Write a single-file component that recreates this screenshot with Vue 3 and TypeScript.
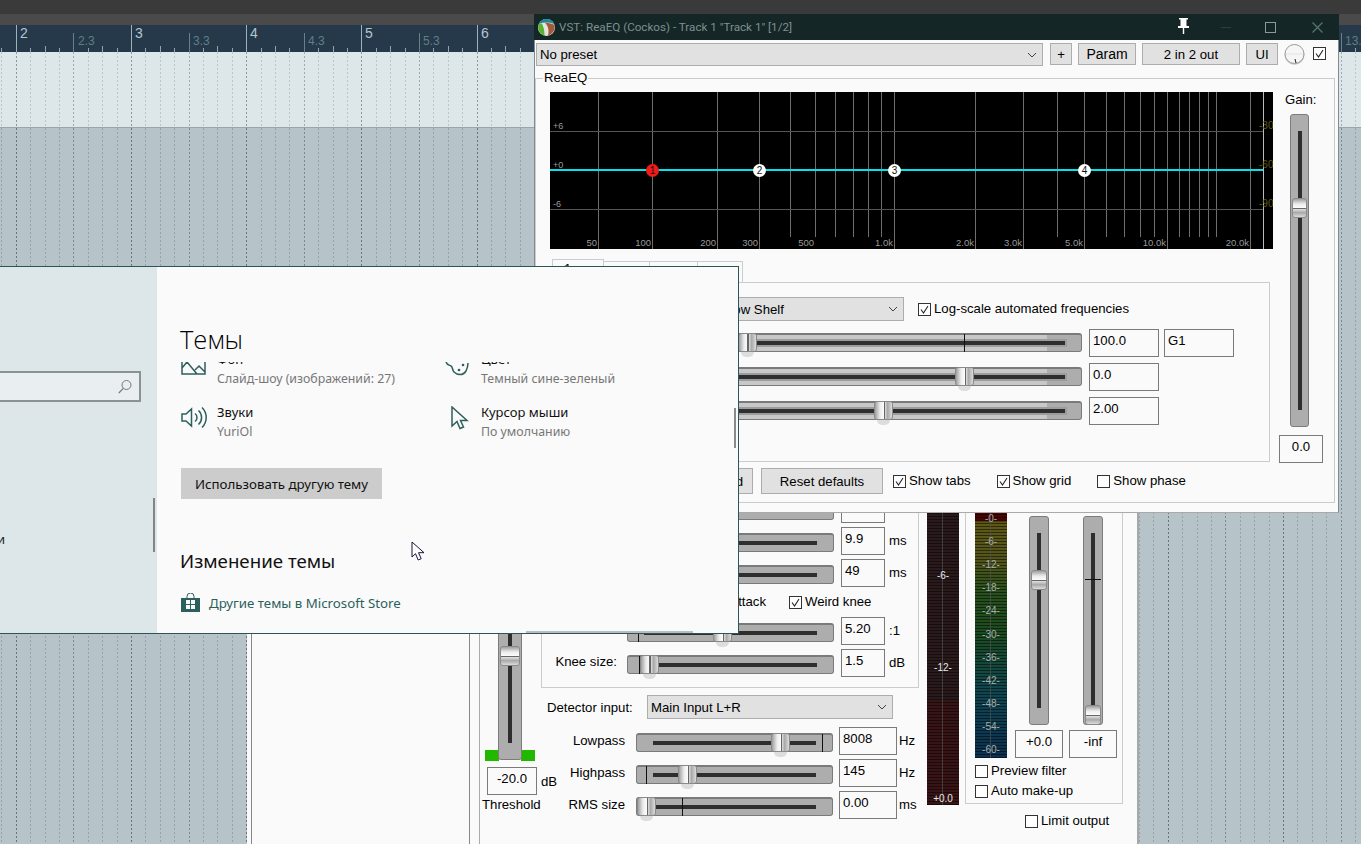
<template>
  <div class="desktop">
    <!-- arrange view behind the windows -->
    <div class="top-strip"></div>
    <div class="menu-strip"></div>
    <div class="ruler"></div>
    <div class="track-light"></div>
    <div class="track-dark"></div>

    <svg class="timeline" width="1361" height="844">
      <g v-for="l in beatLines" :key="l.x">
        <line :x1="l.x" :x2="l.x" :y1="l.rulerTop" y2="52" :stroke="l.rulerColor" />
        <line :x1="l.x" :x2="l.x" y1="52" y2="127" :stroke="l.lightColor" stroke-dasharray="2 2" />
        <line :x1="l.x" :x2="l.x" y1="128" y2="844" :stroke="l.darkColor" stroke-dasharray="2 2" />
      </g>
      <text v-for="b in barLabels" :key="b.text" :x="b.x" :y="b.y" :class="b.half ? 'half-label' : 'bar-label'">{{ b.text }}</text>
    </svg>

    <!-- compressor window, mostly covered -->
    <div class="comp-window">
      <div class="comp-rail"></div>
      <div class="comp-gutter"></div>
      <div class="comp-main">
        <div class="threshold-col">
          <div class="green green-l"></div>
          <div class="green green-r"></div>
          <div class="vfader threshold-fader">
            <div class="vthumb" :style="{ top: '165px' }"></div>
          </div>
          <div class="threshold-value">
            <div class="valbox center thr-box">-20.0</div>
            <span>dB</span>
          </div>
          <div class="threshold-label">Threshold</div>
        </div>

        <div class="comp-center">
          <div class="comp-group">
            <div v-for="r in compRows.slice(0, 3)" :key="r.id" class="comp-row">
              <span class="row-label"></span>
              <div class="slider">
                <div class="thumb" :style="{ left: r.thumb + 'px' }"></div>
              </div>
              <div class="valbox comp-box">{{ r.value }}</div>
              <span class="unit">{{ r.unit }}</span>
            </div>
            <div class="comp-checks">
              <label class="chk-row"><span>Auto attack</span></label>
              <label class="chk-row">
                <span class="box"><svg viewBox="0 0 11 11"><path d="M2 5.500l2.500 3.500 4.500-7" /></svg></span>Weird knee
              </label>
            </div>
            <div v-for="r in compRows.slice(3)" :key="r.id" class="comp-row">
              <span class="row-label">{{ r.label }}</span>
              <div class="slider">
                <i class="mark" :style="{ left: r.mark + 'px' }"></i>
                <div class="thumb" :style="{ left: r.thumb + 'px' }"></div>
              </div>
              <div class="valbox comp-box">{{ r.value }}</div>
              <span class="unit">{{ r.unit }}</span>
            </div>
          </div>

          <div class="detector-row">
            <span>Detector input:</span>
            <div class="combo detector-combo">
              <span>Main Input L+R</span>
              <svg class="chev" viewBox="0 0 10 6"><path d="M1 1l4 4 4-4" /></svg>
            </div>
          </div>
          <div v-for="r in filterRows" :key="r.label" class="filter-row">
            <span class="filter-label">{{ r.label }}</span>
            <div class="slider filter-slider">
              <i class="mark" :style="{ left: r.mark + 'px' }"></i>
              <div class="thumb" :style="{ left: r.thumb + 'px' }"></div>
            </div>
            <div class="valbox filter-box">{{ r.value }}</div>
            <span class="unit">{{ r.unit }}</span>
          </div>
        </div>

        <div class="meter meter-in">
          <span v-for="m in inMeterLabels" :key="m.text" class="m-label" :style="{ top: m.top + 'px' }">{{ m.text }}</span>
        </div>

        <div class="output-col">
          <div class="output-group">
            <div class="output-top">
              <div class="meter meter-out">
                <span v-for="m in outMeterLabels" :key="m.text" class="m-label" :style="{ top: m.top + 'px' }">{{ m.text }}</span>
              </div>
              <div class="out-strip">
                <div class="vfader out-fader">
                  <div class="vthumb" :style="{ top: '53px' }"></div>
                </div>
                <div class="valbox center out-box">+0.0</div>
              </div>
              <div class="out-strip">
                <div class="vfader out-fader">
                  <i class="hmark"></i>
                  <div class="vthumb" :style="{ top: '188px' }"></div>
                </div>
                <div class="valbox center out-box">-inf</div>
              </div>
            </div>
            <label class="chk-row out-check"><span class="box"></span>Preview filter</label>
            <label class="chk-row out-check"><span class="box"></span>Auto make-up</label>
          </div>
          <label class="chk-row limit-check"><span class="box"></span>Limit output</label>
        </div>
      </div>
    </div>

    <!-- ReaEQ plugin window -->
    <div class="eq-window">
      <div class="eq-title">
        <svg class="eq-logo" width="17" height="17" viewBox="0 0 16 16">
          <circle cx="8" cy="8" r="8" fill="#e8e4dc" />
          <path d="M.8 4.6a8 8 0 0 1 14.4 0Q8 2 .8 4.6z" fill="#1d8a9c" />
          <path d="M.7 5Q-1.400 12 6 15.800Q6.500 10 3.800 4.200z" fill="#58b32e" />
          <path d="M6.500 3.400Q11 3.600 15.400 5.400Q17 12.600 9.200 15.900Q11.500 9 6.500 3.400z" fill="#a3593c" />
        </svg>
        <span class="eq-title-text">VST: ReaEQ (Cockos) - Track 1 "Track 1" [1/2]</span>
        <svg class="pin" width="13" height="16" viewBox="0 0 13 16">
          <path d="M2 0h9v1.500H9.500V8H12v2H1V8h2.500V1.500H2zM5.800 10h1.400v6H5.800z" fill="#fff" />
        </svg>
        <i class="win-min"></i>
        <i class="win-max"></i>
        <svg class="win-close" width="11" height="11" viewBox="0 0 11 11">
          <path d="M.5.5l10 10M10.500.5l-10 10" stroke="#557474" stroke-width="1.300" />
        </svg>
      </div>

      <div class="eq-toolbar">
        <div class="combo preset-combo">
          <span>No preset</span>
          <svg class="chev" viewBox="0 0 10 6"><path d="M1 1l4 4 4-4" /></svg>
        </div>
        <button class="btn plus-btn">+</button>
        <button class="btn param-btn">Param</button>
        <button class="btn io-btn">2 in 2 out</button>
        <button class="btn ui-btn">UI</button>
        <svg class="knob" width="21" height="23" viewBox="0 0 21 23">
          <circle cx="10.500" cy="12" r="10" fill="#cfcfcf" />
          <circle cx="10.500" cy="11" r="9.500" fill="#f6f6f6" stroke="#9a9a9a" />
          <path d="M2 11h17" stroke="#e2e2e2" />
          <path d="M11 16l1 4" stroke="#222" />
        </svg>
        <span class="box enable-box"><svg viewBox="0 0 11 11"><path d="M2 5.500l2.500 3.500 4.500-7" /></svg></span>
      </div>

      <div class="eq-group">
        <span class="eq-group-label">ReaEQ</span>
        <div class="eq-left">
          <svg class="graph" width="723" height="157">
            <rect width="723" height="157" fill="#000" />
            <line v-for="g in gridX" :key="g.x" :x1="g.x" :x2="g.x" y1="0" :y2="g.long ? 157 : 145" stroke="#6e6e6e" />
            <line x1="0" x2="713" y1="39.500" y2="39.500" stroke="#555" />
            <line x1="0" x2="713" y1="117.500" y2="117.500" stroke="#555" />
            <line x1="713.500" x2="713.500" y1="0" y2="157" stroke="#bbb" />
            <rect x="0" y="77" width="713" height="2" fill="#00e4ea" />
            <text v-for="t in gridDb" :key="t.text" x="3" :y="t.y" class="db-text">{{ t.text }}</text>
            <text v-for="t in gridDb" :key="'r' + t.y" x="709" :y="t.y" class="db-right">{{ t.right }}</text>
            <text v-for="t in gridHz" :key="t.text" :x="t.x" y="154" text-anchor="end" class="hz-text">{{ t.text }}</text>
            <g v-for="(n, i) in eqNodes" :key="n">
              <circle :cx="n" cy="78.500" r="6.500" :fill="i === 0 ? '#f01a1a' : '#fff'" />
              <text :x="n" y="82" text-anchor="middle" class="node-text">{{ i + 1 }}</text>
            </g>
          </svg>

          <div class="tabs">
            <div class="tab active"><span>1</span></div>
            <div class="tab t2"></div>
            <div class="tab t3"></div>
            <div class="tab t4"></div>
          </div>
          <div class="band-panel">
            <div class="band-type">
              <div class="combo band-combo">
                <span>Low Shelf</span>
                <svg class="chev" viewBox="0 0 10 6"><path d="M1 1l4 4 4-4" /></svg>
              </div>
              <label class="chk-row">
                <span class="box"><svg viewBox="0 0 11 11"><path d="M2 5.500l2.500 3.500 4.500-7" /></svg></span>Log-scale automated frequencies
              </label>
            </div>
            <div v-for="r in bandRows" :key="r.value" class="band-row">
              <div class="slider eq-slider">
                <i v-if="r.mark" class="mark" :style="{ left: r.mark + 'px' }"></i>
                <div class="thumb" :style="{ left: r.thumb + 'px' }"></div>
              </div>
              <div class="valbox band-box">{{ r.value }}</div>
              <div v-if="r.extra" class="valbox band-box">{{ r.extra }}</div>
            </div>
          </div>
          <div class="eq-bottom">
            <button class="btn reset-band">Reset band</button>
            <button class="btn reset-all">Reset defaults</button>
            <label class="chk-row"><span class="box"><svg viewBox="0 0 11 11"><path d="M2 5.500l2.500 3.500 4.500-7" /></svg></span>Show tabs</label>
            <label class="chk-row"><span class="box"><svg viewBox="0 0 11 11"><path d="M2 5.500l2.500 3.500 4.500-7" /></svg></span>Show grid</label>
            <label class="chk-row"><span class="box"></span>Show phase</label>
          </div>
        </div>

        <div class="gain-col">
          <div class="gain-label">Gain:</div>
          <div class="vfader gain-fader">
            <div class="vthumb" :style="{ top: '83px' }"></div>
          </div>
          <div class="valbox center gain-box">0.0</div>
        </div>
      </div>
    </div>

    <!-- Windows settings window -->
    <div class="settings">
      <aside class="side">
        <div class="search">
          <svg width="16" height="16" viewBox="0 0 16 16">
            <circle cx="9.500" cy="6" r="4.500" fill="none" stroke="#777" />
            <path d="M6.300 9.300L1.800 14" stroke="#777" stroke-width="1.200" />
          </svg>
        </div>
        <div class="side-item">и</div>
        <i class="side-scroll"></i>
      </aside>
      <main class="content">
        <h1>Темы</h1>
        <div class="scroll">
          <div class="tiles">
            <div class="tile">
              <svg width="26" height="24" viewBox="0 0 26 24" class="ic">
                <path d="M1 9v12h23V9M1 15l5-6 10 12M14 17l4-4 6 6" />
              </svg>
              <div><div class="t">Фон</div><div class="s">Слайд-шоу (изображений: 27)</div></div>
            </div>
            <div class="tile">
              <svg width="26" height="24" viewBox="0 0 26 24" class="ic">
                <path d="M1 9c1 3 3 3 5 4 2 1 1 4 3 6 3 3 9 4 12-1 1-2 2-4 2-8" />
                <circle cx="14" cy="17" r="1.300" fill="#2d5f5d" stroke="none" />
                <circle cx="18" cy="12" r="1.300" fill="#2d5f5d" stroke="none" />
              </svg>
              <div><div class="t">Цвет</div><div class="s">Темный сине-зеленый</div></div>
            </div>
            <div class="tile">
              <svg width="26" height="24" viewBox="0 0 26 24" class="ic">
                <path d="M1 8h4l5.500-5v17L5 15H1zM14 7.500a5 5 0 0 1 0 8M17.500 4.500a9.500 9.500 0 0 1 0 14M21 1.500a14 14 0 0 1 0 20" />
              </svg>
              <div><div class="t">Звуки</div><div class="s">YuriOl</div></div>
            </div>
            <div class="tile">
              <svg width="26" height="24" viewBox="0 0 26 24" class="ic">
                <path d="M7 1v19l5-4.500 3 7 3.500-1.500-3-6.500H22z" />
              </svg>
              <div><div class="t">Курсор мыши</div><div class="s">По умолчанию</div></div>
            </div>
          </div>
          <button class="theme-btn">Использовать другую тему</button>
          <h2>Изменение темы</h2>
          <a class="store">
            <svg width="19" height="19" viewBox="0 0 19 19">
              <path d="M6 5V3.500a3.500 3.500 0 0 1 7 0V5" fill="none" stroke="#2d5f5d" />
              <path d="M0 5h19v14H0z" fill="#2d5f5d" />
              <path d="M5 7h4v4H5zM10 7h4v4h-4zM5 12h4v4H5zM10 12h4v4h-4z" fill="#fafafa" />
            </svg>
            Другие темы в Microsoft Store
          </a>
        </div>
        <i class="content-scroll"></i>
        <i class="bottom-scroll"></i>
      </main>
    </div>

    <svg class="pointer" width="14" height="21" viewBox="0 0 14 21">
      <path d="M1 1v15l3.500-3.300 2.700 6.300 3-1.300-2.700-6H13z" fill="#fff" stroke="#14143c" stroke-linejoin="round" />
    </svg>
  </div>
</template>

<script setup lang="ts">
interface BeatLine {
  x: number
  rulerTop: number
  rulerColor: string
  lightColor: string
  darkColor: string
}

// 14.4px per eighth of a bar, bar "2" sits at x=15.7
const beatLines: BeatLine[] = []
for (let k = -1; k < 94; k++) {
  const x = Math.round(15.7 + 14.4 * k) + 0.5
  const bar = k % 8 === 0
  const half = k % 4 === 0
  const quarter = k % 2 === 0
  beatLines.push({
    x,
    rulerTop: bar ? 25 : half ? 33 : quarter ? 46 : 48,
    rulerColor: bar ? '#9fb2bb' : half ? '#688088' : '#93a5ac',
    lightColor: bar ? '#87979c' : half ? '#9dabaf' : '#b9c6ca',
    darkColor: bar ? '#67767c' : half ? '#7b8a90' : '#94a4aa',
  })
}

const allBarLabels: { text: string; x: number; y: number; half: boolean }[] = []
for (let n = 2; n <= 13; n++) {
  const x = Math.round(15.7 + 115.2 * (n - 2))
  allBarLabels.push({ text: String(n), x: x + 4, y: 38, half: false })
  allBarLabels.push({ text: n + '.3', x: x + 62, y: 45, half: true })
}
// labels behind the plugin window are never seen
const barLabels = allBarLabels.filter((b) => b.x < 520 || b.x > 1339)

const gridX = [
  [48, 1], [102, 1], [167, 1], [209, 1], [240, 0], [265, 0], [285, 0], [303, 0], [318, 0], [331, 0], [344, 1],
  [425, 1], [473, 1], [507, 0], [534, 1], [556, 0], [574, 0], [590, 0], [604, 0], [617, 1], [629, 0], [639, 0],
  [649, 0], [658, 0], [666, 0], [700, 1],
].map(([x, long]) => ({ x: x + 0.5, long: long === 1 }))

const gridDb = [
  { text: '+6', right: '-30', y: 37 },
  { text: '+0', right: '-60', y: 76 },
  { text: '-6', right: '-90', y: 115 },
]

const gridHz = [
  { text: '50', x: 47 }, { text: '100', x: 101 }, { text: '200', x: 166 }, { text: '300', x: 208 },
  { text: '500', x: 264 }, { text: '1.0k', x: 343 }, { text: '2.0k', x: 424 }, { text: '3.0k', x: 472 },
  { text: '5.0k', x: 533 }, { text: '10.0k', x: 616 }, { text: '20.0k', x: 699 },
]

const eqNodes = [102.5, 209.5, 344.5, 534.5]

const bandRows = [
  { value: '100.0', extra: 'G1', thumb: 98, mark: 324 },
  { value: '0.0', extra: '', thumb: 315, mark: 0 },
  { value: '2.00', extra: '', thumb: 234, mark: 0 },
]

const compRows = [
  { id: 'pre', label: '', value: '', unit: '', thumb: 40, mark: 10 },
  { id: 'attack', label: '', value: '9.9', unit: 'ms', thumb: 40, mark: 10 },
  { id: 'release', label: '', value: '49', unit: 'ms', thumb: 40, mark: 10 },
  { id: 'ratio', label: '', value: '5.20', unit: ':1', thumb: 85, mark: 10 },
  { id: 'knee', label: 'Knee size:', value: '1.5', unit: 'dB', thumb: 12, mark: 11 },
]

const filterRows = [
  { label: 'Lowpass', value: '8008', unit: 'Hz', thumb: 134, mark: 185 },
  { label: 'Highpass', value: '145', unit: 'Hz', thumb: 41, mark: 9 },
  { label: 'RMS size', value: '0.00', unit: 'ms', thumb: 0, mark: 45 },
]

const inMeterLabels = [
  { text: '-6-', top: 91 },
  { text: '-12-', top: 183 },
  { text: '+0.0', top: 314 },
]

const outMeterLabels = ['-0-', '-6-', '-12-', '-18-', '-24-', '-30-', '-36-', '-42-', '-48-', '-54-', '-60-'].map((text, i) => ({
  text,
  top: Math.round(33 + i * 23.1),
}))
</script>

<style scoped>
.desktop {
  position: relative;
  width: 1361px;
  height: 844px;
  overflow: hidden;
  display: flex;
  flex-direction: column;
  font-family: "Liberation Sans", Arial, sans-serif;
  font-size: 13.2px;
  color: #000;
}
.top-strip { height: 14px; background: #3a3a3a; }
.menu-strip { height: 11px; background: #4a4a4a; }
.ruler { height: 27px; background: #25394a; }
.track-light { height: 75px; background: #dde6e8; }
.track-dark { flex: 1; background: #b6c4ca; border-top: 1px solid #98a6aa; }
.timeline { position: absolute; left: 0; top: 0; }
.bar-label { font: 14px "Liberation Sans", sans-serif; fill: #b4c6ce; }
.half-label { font: 12px "Liberation Sans", sans-serif; fill: #5f7f86; }

/* shared controls */
.combo {
  display: flex;
  align-items: center;
  justify-content: space-between;
  box-sizing: border-box;
  background: #e1e1e1;
  border: 1px solid #adadad;
  padding: 0 5px 0 3px;
}
.chev { width: 10px; height: 6px; fill: none; stroke: #444; stroke-width: 1; }
.btn {
  box-sizing: border-box;
  height: 22px;
  padding: 0;
  background: #e1e1e1;
  border: 1px solid #adadad;
  font: 13.2px "Liberation Sans", sans-serif;
  color: #000;
}
.valbox {
  box-sizing: border-box;
  height: 28px;
  background: #fafafa;
  border: 1px solid #7a7a7a;
  padding: 0 3px;
  line-height: 21px;
}
.valbox.center { text-align: center; line-height: 22px; }
.box {
  box-sizing: border-box;
  flex: none;
  display: inline-block;
  width: 13px;
  height: 13px;
  background: #fff;
  border: 1px solid #333;
}
.box svg { display: block; width: 11px; height: 11px; fill: none; stroke: #222; stroke-width: 1.1; }
.chk-row { display: flex; align-items: center; gap: 3px; white-space: nowrap; line-height: 16px; }

.slider {
  position: relative;
  box-sizing: border-box;
  height: 19px;
  margin-top: 6px;
  background: #adadad;
  border: 1px solid #7a7a7a;
  border-top-width: 2px;
  border-radius: 3px;
}
.slider::before {
  content: "";
  position: absolute;
  left: 16px;
  right: 16px;
  top: 6px;
  height: 4px;
  background: #2e2e2e;
}
.mark { position: absolute; top: -1px; bottom: -1px; width: 1px; background: #111; }
.thumb {
  position: absolute;
  top: -2px;
  width: 19px;
  height: 19px;
  box-sizing: border-box;
  border: 1px solid #8a8a8a;
  border-radius: 3px;
  background: linear-gradient(90deg, #9f9f9f, #ececec 30%, #fbfbfb 50%, #666 50%, #666 56%, #e6e6e6 56%, #a9a9a9 74%, #dcdcdc);
}
.thumb::after {
  content: "";
  position: absolute;
  left: 2px;
  right: 2px;
  bottom: -6px;
  height: 5px;
  border-radius: 0 0 8px 8px;
  background: rgba(120, 120, 120, 0.22);
}
.vfader {
  position: relative;
  box-sizing: border-box;
  background: #adadad;
  border: 1px solid #7c7c7c;
  border-radius: 3px;
}
.vfader::before {
  content: "";
  position: absolute;
  left: 50%;
  margin-left: -2px;
  top: 16px;
  bottom: 16px;
  width: 4px;
  background: #2e2e2e;
}
.vthumb {
  position: absolute;
  left: 1px;
  right: 1px;
  height: 20px;
  box-sizing: border-box;
  border: 1px solid #8a8a8a;
  border-radius: 3px;
  background: linear-gradient(180deg, #9f9f9f, #ececec 28%, #fbfbfb 48%, #666 48%, #666 54%, #e6e6e6 54%, #a9a9a9 76%, #dcdcdc);
}
.hmark { position: absolute; left: 1px; right: 1px; top: 62px; height: 1px; background: #111; z-index: 1; }

/* compressor window */
.comp-window {
  position: absolute;
  left: 247px;
  top: 480px;
  width: 892px;
  height: 364px;
  display: flex;
  background: #fafafa;
  border-right: 2px solid #a8a8a8;
  box-sizing: border-box;
}
.comp-rail { width: 219px; margin-left: 4px; border-left: 1px solid #888; border-right: 1px solid #888; flex: none; box-sizing: border-box; }
.comp-gutter { width: 9px; flex: none; border-right: 1px solid #aaa; }
.comp-main { flex: 1; display: flex; align-items: flex-start; }
.threshold-col { position: relative; width: 61px; flex: none; height: 340px; }
.threshold-fader { width: 24px; height: 280px; margin-left: 18px; }
.green { position: absolute; top: 270px; height: 11px; width: 14px; background: #22b800; }
.green-l { left: 5px; }
.green-r { left: 41px; }
.threshold-value { display: flex; align-items: center; gap: 4px; margin: 7px 0 0 7px; width: 90px; }
.thr-box { width: 50px; flex: none; }
.threshold-label { margin: 2px 0 0 2px; white-space: nowrap; }
.comp-center { width: 378px; flex: none; }
.comp-group {
  box-sizing: border-box;
  width: 378px;
  padding: 14px 0 10px;
  border: 1px solid #ccc;
  display: flex;
  flex-direction: column;
  gap: 4px;
}
.comp-row { display: flex; align-items: flex-start; height: 28px; }
.row-label { width: 75px; margin-right: 10px; text-align: right; line-height: 25px; flex: none; }
.comp-row .slider { width: 207px; flex: none; }
.comp-box { width: 44px; margin-left: 7px; flex: none; }
.unit { margin-left: 4px; line-height: 28px; flex: none; }
.comp-checks { display: flex; height: 22px; align-items: center; padding-left: 158px; gap: 23px; }
.detector-row { display: flex; align-items: center; margin-top: 7px; padding-left: 6px; }
.detector-row > span { width: 100px; flex: none; }
.detector-combo { width: 246px; height: 24px; }
.filter-row { display: flex; align-items: flex-start; height: 28px; margin-top: 4px; }
.detector-row + .filter-row { margin-top: 8px; }
.filter-label { width: 84px; text-align: right; line-height: 28px; flex: none; }
.filter-slider { width: 197px; margin-left: 11px; flex: none; }
.filter-box { width: 58px; margin-left: 6px; flex: none; }
.filter-row .unit { margin-left: 2px; }

.meter { position: relative; width: 32px; flex: none; }
.meter::before {
  content: "";
  position: absolute;
  inset: 0;
  background: repeating-linear-gradient(180deg, rgba(0, 0, 0, 0.5) 0 1px, transparent 1px 3px);
}
.meter::after {
  content: "";
  position: absolute;
  left: 15px;
  top: 0;
  bottom: 0;
  width: 1px;
  background: rgba(80, 80, 80, 0.7);
}
.m-label {
  position: absolute;
  left: 0;
  right: 0;
  z-index: 1;
  text-align: center;
  font-size: 10px;
  line-height: 10px;
}
.meter-in {
  height: 325px;
  margin-left: 8px;
  background: linear-gradient(180deg, #2a1a1c 0, #2a1a1c 68%, #381416 68%);
}
.meter-in .m-label { color: #e8e8e8; }
.meter-out {
  height: 277px;
  background: linear-gradient(180deg, #4a0303 0, #4a0303 14%, #5e5816 15%, #54541a 28%, #28501c 40%, #1c4a20 55%, #0f4650 76%, #0c3050 100%);
}
.meter-out .m-label { color: #a4aeac; }
.output-col { margin-left: 6px; width: 158px; flex: none; }
.output-group {
  box-sizing: border-box;
  width: 158px;
  height: 324px;
  padding: 0 0 0 9px;
  border: 1px solid #ccc;
  display: flex;
  flex-direction: column;
}
.output-top { display: flex; }
.out-strip { display: flex; flex-direction: column; align-items: center; width: 48px; margin-left: 6px; }
.meter-out + .out-strip { margin-left: 8px; }
.out-fader { width: 20px; height: 209px; margin-top: 35px; }
.out-box { width: 48px; margin-top: 5px; }
.out-check { margin-top: 5px; }
.out-check + .out-check { margin-top: 4px; }
.limit-check { margin: 9px 0 0 60px; }

/* ReaEQ window */
.eq-window {
  position: absolute;
  left: 534px;
  top: 14px;
  width: 805px;
  height: 499px;
  box-sizing: border-box;
  background: #fafafa;
  border: 1px solid #7d8c8c;
  border-top: 0;
  border-bottom-color: #aaa;
}
.eq-title {
  height: 26px;
  margin: 0 -1px;
  background: #142626;
  display: flex;
  align-items: center;
  padding-left: 4px;
}
.eq-logo { flex: none; }
.eq-title-text { margin-left: 4px; font: 11.650px Roboto, sans-serif; color: #7f9090; white-space: nowrap; width: 618px; }
.pin { flex: none; margin-top: -3px; }
.win-min { width: 10px; height: 1px; background: #2b4141; margin-left: 31px; flex: none; }
.win-max { width: 9px; height: 9px; border: 1px solid #8a9a9a; margin-left: 34px; flex: none; }
.win-close { margin-left: 36px; flex: none; }
.eq-toolbar { display: flex; align-items: flex-start; padding: 3px 0 0 1px; height: 35px; box-sizing: border-box; }
.preset-combo { width: 507px; height: 23px; flex: none; }
.plus-btn { width: 22px; margin-left: 7px; }
.param-btn { width: 58px; margin-left: 6px; font-size: 14px; }
.io-btn { width: 98px; margin-left: 6px; }
.ui-btn { width: 32px; margin-left: 6px; }
.knob { margin: 0 0 0 6px; flex: none; }
.enable-box { margin: 4px 0 0 8px; }
.eq-group {
  position: relative;
  display: flex;
  box-sizing: border-box;
  width: 800px;
  height: 425px;
  margin-top: 3px;
  padding: 13px 0 0 14px;
  border: 1px solid #ccc;
}
.eq-group-label {
  position: absolute;
  left: 7px;
  top: -9px;
  padding: 0 1px;
  background: #fafafa;
  line-height: 16px;
}
.eq-left { width: 723px; flex: none; }
.graph { display: block; }
.db-text { font: 9px "Liberation Sans", sans-serif; fill: #9a9a9a; }
.db-right { font: 10px "Liberation Sans", sans-serif; fill: #5c5c10; }
.hz-text { font: 9.5px "Liberation Sans", sans-serif; fill: #999; }
.node-text { font: 10px "Liberation Sans", sans-serif; fill: #111; }
.tabs { display: flex; align-items: flex-end; margin: 10px 0 0 2px; height: 23px; }
.tab { box-sizing: border-box; height: 21px; border: 1px solid #ccc; border-bottom: 0; margin-left: -1px; }
.tab.active { width: 52px; height: 23px; padding-left: 11px; background: #fafafa; margin-left: 0; }
.tab.active span { font-size: 13px; line-height: 18px; }
.t2 { width: 47px; }
.t3 { width: 49px; }
.t4 { width: 46px; }
.band-panel {
  box-sizing: border-box;
  width: 718px;
  height: 180px;
  margin-left: 2px;
  padding-top: 14px;
  border: 1px solid #ccc;
}
.band-type { display: flex; align-items: center; margin-left: 167px; }
.band-combo { width: 184px; height: 24px; margin-right: 14px; flex: none; padding-left: 5px; }
.band-row { display: flex; align-items: flex-start; gap: 5px; margin: 6px 0 0 86px; }
.band-type + .band-row { margin-top: 8px; }
.eq-slider {
  width: 443px;
  margin: 4px 2px 0 0;
  flex: none;
  background: linear-gradient(90deg, #c8c8c8 0, #c8c8c8 calc(100% - 34px), #adadad calc(100% - 34px));
}
.eq-slider::before { box-shadow: 0 0 0 2px #9c9c9c; }
.band-box { width: 70px; flex: none; }
.eq-bottom { display: flex; align-items: center; margin-top: 6px; }
.reset-band { width: 91px; height: 26px; margin-left: 112px; flex: none; text-align: right; padding-right: 9px; }
.reset-all { width: 122px; height: 26px; margin: 0 10px 0 8px; flex: none; }
.eq-bottom .chk-row { margin-right: 26px; }
.gain-col { margin-left: 6px; display: flex; flex-direction: column; width: 44px; }
.gain-label { line-height: 16px; margin-left: 6px; }
.gain-fader { width: 19px; height: 313px; margin: 6px 0 0 11px; }
.gain-box { width: 44px; margin-top: 8px; }

/* settings window */
.settings {
  position: absolute;
  left: 0;
  top: 266px;
  width: 739px;
  height: 368px;
  box-sizing: border-box;
  display: flex;
  background: #fafafa;
  border: 1px solid #2d5555;
  border-left: 0;
  font-family: "Noto Sans", "Open Sans", sans-serif;
}
.side { position: relative; width: 157px; flex: none; background: #dde6e8; }
.search {
  box-sizing: border-box;
  width: 141px;
  height: 31px;
  margin-top: 104px;
  background: #e9eff1;
  border: 2px solid #8c9292;
  border-left: 0;
  display: flex;
  align-items: center;
  justify-content: flex-end;
  padding-right: 6px;
}
.side-item { margin-top: 128px; font-size: 13px; line-height: 18px; color: #222; margin-left: -3px; }
.side-scroll { position: absolute; left: 153px; top: 231px; width: 2px; height: 54px; background: #848484; }
.content { position: relative; flex: 1; padding-left: 23px; min-width: 0; }
h1 {
  margin: 0;
  height: 95px;
  padding-top: 54px;
  box-sizing: border-box;
  font: 300 25.500px/36px "Open Sans", "Noto Sans", sans-serif;
  color: #000;
}
.scroll { height: 271px; overflow: hidden; }
.tiles {
  display: grid;
  grid-template-columns: 264px 264px;
  grid-auto-rows: 53px;
  margin-top: -13px;
}
.tile { display: flex; gap: 10px; padding-left: 1px; }
.ic { flex: none; margin-top: 4px; fill: none; stroke: #2d5f5d; stroke-width: 1.5; }
.t { font-size: 13px; line-height: 21px; color: #111; }
.s { font-size: 12.350px; line-height: 18px; color: #777; white-space: nowrap; }
.theme-btn {
  display: block;
  width: 201px;
  height: 31px;
  margin: 13px 0 0 1px;
  padding: 0;
  border: 0;
  background: #ccc;
  font: 13.300px "Noto Sans", sans-serif;
  color: #111;
}
h2 { margin: 47px 0 0; font: 400 18.700px/30px "Noto Sans", sans-serif; color: #111; }
.store { display: flex; align-items: center; gap: 9px; margin: 17px 0 0 1px; font-size: 13.250px; color: #2d5f5d; }
.content-scroll { position: absolute; right: 2px; top: 141px; width: 2px; height: 40px; background: #8a8a8a; }
.bottom-scroll { position: absolute; left: 369px; bottom: 0; width: 167px; height: 2px; background: #bcbcbc; }
.pointer { position: absolute; left: 411px; top: 541px; }
</style>

<style>
html, body { background: #b6c4ca; }
</style>
